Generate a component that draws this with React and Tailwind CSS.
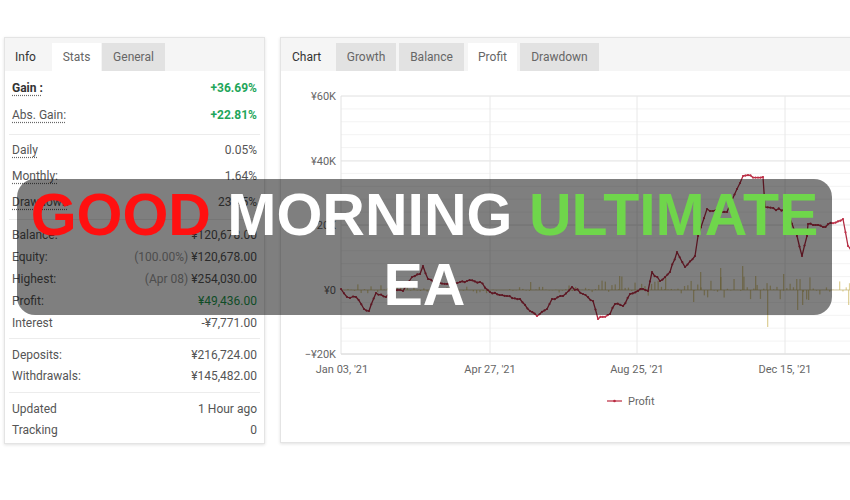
import React from "react";

const KEY = [
  [341,290],[347,298],[356,298],[364,310],[369,312],[376,294],[386,298],[392,290],[403,292],[412,278],[420,275],[423,267],[428,280],[437,285],[447,285],[460,283],[467,282],[480,283],[490,293],[507,297],[520,300],[530,312],[537,317],[547,310],[552,300],[563,297],[572,288],[583,295],[593,302],[598,320],[610,315],[615,305],[623,307],[630,295],[643,290],[648,292],[652,273],[660,282],[670,273],[677,253],[685,268],[695,257],[698,237],[707,210],[713,212],[727,213],[737,190],[743,177],[763,178],[765,208],[787,212],[797,237],[802,257],[807,237],[808,225],[823,228],[843,220],[848,247],[855,255]
];

function makeRand(s) {
  let seed = s;
  return () => {
    seed = (seed * 9301 + 49297) % 233280;
    return seed / 233280;
  };
}

function buildLine() {
  const rand = makeRand(11);
  const pts = [];
  for (let i = 0; i < KEY.length - 1; i++) {
    const [x0, y0] = KEY[i];
    const [x1, y1] = KEY[i + 1];
    const n = Math.max(1, Math.round((x1 - x0) / 2.6));
    for (let k = 0; k < n; k++) {
      const t = k / n;
      const j = k === 0 ? 0 : (rand() - 0.5) * 2.4;
      pts.push([x0 + (x1 - x0) * t, y0 + (y1 - y0) * t + j]);
    }
  }
  pts.push(KEY[KEY.length - 1]);
  return pts;
}

function buildBars() {
  const rand = makeRand(5);
  const bars = [];
  for (let x = 344; x < 860; x += 3.3) {
    const r = rand();
    const amp = x < 600 ? 5 : 12;
    let h = (r - 0.42) * amp * 2;
    if (rand() < 0.4) h = h * 0.2;
    bars.push([x, h]);
  }
  const spikes = [[767,-37],[797,-20],[802,-15],[808,-10],[848,-15],[742,24],[720,22],[700,18],[665,12],[388,12],[530,8],[619,14],[693,-12],[755,14],[783,16]];
  spikes.forEach((s) => bars.push(s));
  return bars;
}

const LINE = buildLine();
const BARS = buildBars();

function Row({ label, value, labelClass = "", valueClass = "", prefix, h = "h-[22px]" }) {
  return (
    <div className={`flex items-center justify-between px-[3px] ${h}`}>
      <span className={labelClass}>{label}</span>
      <span className={valueClass}>
        {prefix && <span className="text-[#9a9a9a]">{prefix} </span>}
        {value}
      </span>
    </div>
  );
}

const dotted = "underline decoration-dotted decoration-[#666] underline-offset-[3px]";

function StatsCard() {
  return (
    <div className="w-[261px] h-[407px] shrink-0 border border-[#e4e4e4] bg-white shadow-[0_1px_3px_rgba(0,0,0,0.12)] text-[12px] text-[#555]" style={{ fontFamily: "Roboto, 'Liberation Sans', sans-serif" }}>
      <div className="flex items-end h-[33px] pt-[5px] bg-[#f5f5f5]">
        <div className="w-[47px] h-[28px] flex items-center pl-[10px] text-[#333]">Info</div>
        <div className="w-[49px] h-[28px] flex items-center justify-center bg-white text-[#666]">Stats</div>
        <div className="w-[63px] h-[28px] ml-[1px] flex items-center justify-center bg-[#e2e2e2] text-[#666]">General</div>
      </div>
      <div className="px-[4px]">
        <div className="pt-[3px] pb-[6px] border-b border-[#ececec]">
          <Row h="h-[27px]" label="Gain :" value="+36.69%" labelClass={`font-bold text-[#333] ${dotted}`} valueClass="font-bold text-[#1fa65b]" />
          <Row h="h-[27px]" label="Abs. Gain:" value="+22.81%" labelClass={dotted} valueClass="font-bold text-[#1fa65b]" />
        </div>
        <div className="pt-[2px] pb-[4px] border-b border-[#ececec]">
          <Row h="h-[26px]" label="Daily" value="0.05%" labelClass={dotted} />
          <Row h="h-[26px]" label="Monthly:" value="1.64%" labelClass={dotted} />
          <Row h="h-[26px]" label="Drawdown" value="23.45%" labelClass={dotted} />
        </div>
        <div className="pt-[4px] pb-[4px] border-b border-[#ececec]">
          <Row label="Balance:" value="¥120,678.00" />
          <Row label="Equity:" prefix="(100.00%)" value="¥120,678.00" />
          <Row label="Highest:" prefix="(Apr 08)" value="¥254,030.00" />
          <Row label="Profit:" value="¥49,436.00" valueClass="text-[#1f9a4f]" />
          <Row label="Interest" value="-¥7,771.00" />
        </div>
        <div className="pt-[5px] pb-[6px] border-b border-[#ececec]">
          <Row h="h-[21px]" label="Deposits:" value="¥216,724.00" />
          <Row h="h-[21px]" label="Withdrawals:" value="¥145,482.00" />
        </div>
        <div className="pt-[5px]">
          <Row h="h-[21px]" label="Updated" value="1 Hour ago" />
          <Row h="h-[21px]" label="Tracking" value="0" />
        </div>
      </div>
    </div>
  );
}

function Chart() {
  const minor = [];
  for (let y = 97; y < 355; y += 12.9) minor.push(y);
  const major = [97, 162, 226, 291, 355];
  const yl = [["¥60K", 97], ["¥40K", 162], ["¥20K", 226], ["¥0", 291], ["−¥20K", 355]];
  const xl = [["Jan 03, '21", 342], ["Apr 27, '21", 490], ["Aug 25, '21", 637], ["Dec 15, '21", 785]];
  const d = LINE.map((p, i) => `${i ? "L" : "M"}${p[0].toFixed(1)} ${p[1].toFixed(1)}`).join(" ");
  return (
    <svg width="600" height="370" viewBox="281 72 600 370" className="block" style={{ fontFamily: "Roboto, 'Liberation Sans', sans-serif" }}>
      {minor.map((y, i) => (
        <line key={"m" + i} x1="341" x2="900" y1={y} y2={y} stroke="#f3f3f3" strokeWidth="1" />
      ))}
      {major.map((y, i) => (
        <line key={"M" + i} x1="341" x2="900" y1={y} y2={y} stroke="#e6e6e6" strokeWidth="1" />
      ))}
      {[490, 637, 785].map((x) => (
        <line key={x} x1={x} x2={x} y1="97" y2="355" stroke="#e8e8e8" strokeWidth="1" />
      ))}
      <line x1="341" x2="341" y1="97" y2="355" stroke="#e2e2e2" strokeWidth="1" />
      <line x1="341" x2="900" y1="355" y2="355" stroke="#dedede" strokeWidth="1.2" />
      <line x1="341" x2="900" y1="291" y2="291" stroke="#cdb866" strokeWidth="0.8" opacity="0.6" />
      {BARS.map(([x, h], i) => (
        <rect key={"b" + i} x={x} width="1.3" y={h > 0 ? 291 - h : 291} height={Math.abs(h)} fill="#cdb866" opacity="0.65" />
      ))}
      <path d={d} fill="none" stroke="#b02c42" strokeWidth="1.3" strokeLinejoin="round" />
      {LINE.map((p, i) => (
        <circle key={"c" + i} cx={p[0]} cy={p[1]} r="1.1" fill="#c03048" />
      ))}
      {yl.map(([t, y]) => (
        <text key={t} x="336" y={y + 4} textAnchor="end" fontSize="11" fill="#666">{t}</text>
      ))}
      {xl.map(([t, x]) => (
        <text key={t} x={x} y="374" textAnchor="middle" fontSize="11" fill="#666">{t}</text>
      ))}
      <line x1="607" x2="622" y1="402" y2="402" stroke="#c0394d" strokeWidth="1.3" />
      <circle cx="614.5" cy="402" r="1.3" fill="#b8283f" />
      <text x="628" y="405.5" fontSize="11" fill="#666">Profit</text>
    </svg>
  );
}

function ChartCard() {
  return (
    <div className="w-[620px] h-[406px] shrink-0 border border-[#e4e4e4] bg-white shadow-[0_1px_3px_rgba(0,0,0,0.12)] text-[12px] text-[#666]" style={{ fontFamily: "Roboto, 'Liberation Sans', sans-serif" }}>
      <div className="flex items-end h-[33px] pt-[5px] bg-[#f5f5f5]">
        <div className="w-[55px] h-[28px] flex items-center pl-[11px] text-[#333]">Chart</div>
        <div className="w-[60px] h-[28px] flex items-center justify-center bg-[#e2e2e2]">Growth</div>
        <div className="w-[65px] h-[28px] ml-[3px] flex items-center justify-center bg-[#e2e2e2]">Balance</div>
        <div className="w-[49px] h-[28px] ml-[4px] flex items-center justify-center bg-white">Profit</div>
        <div className="w-[79px] h-[28px] ml-[3px] flex items-center justify-center bg-[#e2e2e2]">Drawdown</div>
      </div>
      <Chart />
    </div>
  );
}

export default function App() {
  return (
    <div className="relative w-[850px] h-[500px] overflow-hidden bg-white">
      <div className="flex gap-[15px] pl-[4px] pt-[37px]">
        <StatsCard />
        <ChartCard />
      </div>
      <div
        className="absolute left-[17px] top-[179px] w-[815px] h-[136px] rounded-[18px] bg-black/50 flex flex-col items-center pt-[1px] font-bold text-[59px] leading-[70px] text-white whitespace-nowrap"
        style={{ fontFamily: "'Liberation Sans', Arial, sans-serif" }}
      >
        <div>
          <span className="text-[#ff1010]">GOOD</span> MORNING <span className="text-[#6fd64b]">ULTIMATE</span>
        </div>
        <div>EA</div>
      </div>
    </div>
  );
}
